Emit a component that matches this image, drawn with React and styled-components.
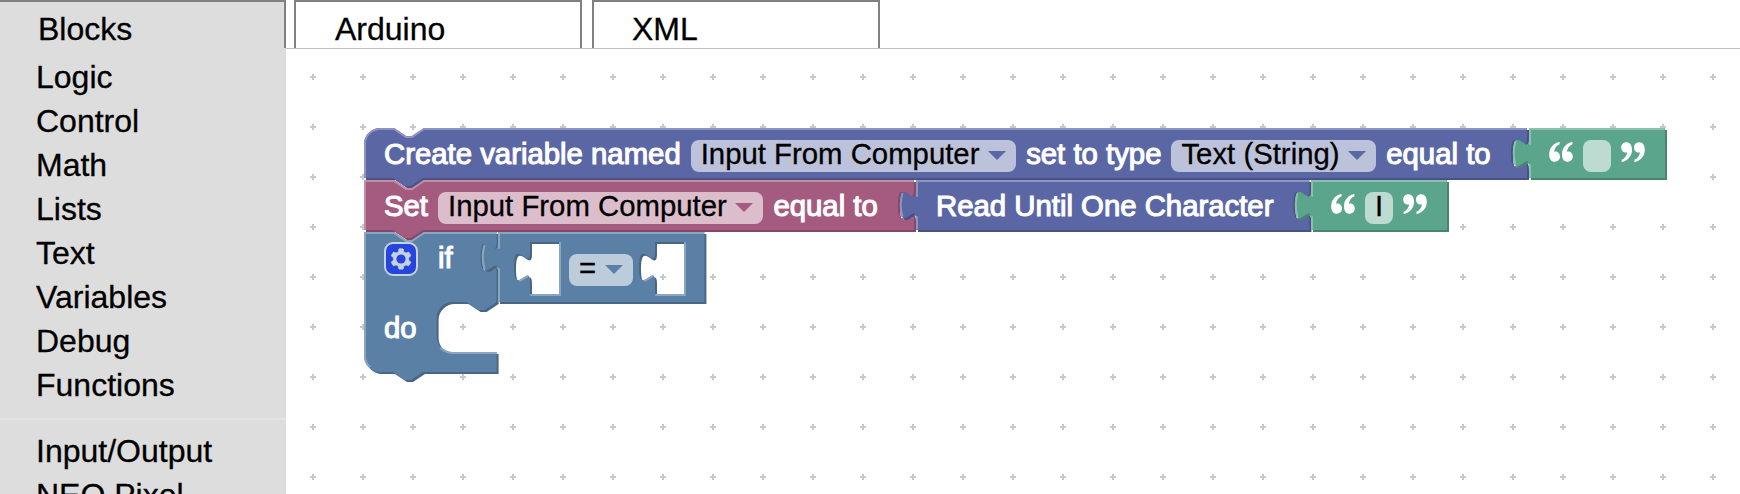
import React from "react";
import styled, { createGlobalStyle } from "styled-components";

const GlobalStyle = createGlobalStyle`
  * { box-sizing: border-box; }
  html, body { margin: 0; padding: 0; overflow: hidden; background: #fff; }
  body { font-family: "Liberation Sans", Arial, sans-serif; color: #000; }
`;

const Page = styled.div`
  display: flex;
  flex-direction: column;
  width: 1740px;
  height: 494px;
  overflow: hidden;
  -webkit-text-stroke: 0.3px #000;
`;

const TabBar = styled.header`
  display: flex;
  flex: none;
  height: 48px;
`;

const Tab = styled.div`
  width: ${(p) => p.$width}px;
  height: 48px;
  margin-right: ${(p) => p.$after}px;
  padding-left: ${(p) => p.$indent}px;
  border: solid #808080;
  border-width: ${(p) => (p.$active ? "2px 2px 0 0" : "2px 2px 0 2px")};
  background: ${(p) => (p.$active ? "#ddd" : "#fff")};
  font-size: 32px;
  line-height: 54px;
  white-space: nowrap;
`;

const Main = styled.div`
  display: flex;
  flex: 1;
  min-height: 0;
`;

const Toolbox = styled.nav`
  flex: none;
  width: 286px;
  padding-top: 7px;
  background: #ddd;
  overflow: hidden;
`;

const Category = styled.div`
  height: 44px;
  padding-left: 36px;
  font-size: 32px;
  line-height: 44px;
  white-space: nowrap;
`;

const Separator = styled.hr`
  height: 2px;
  margin: 11px 0 9px;
  border: 0;
  background: #e5e5e5;
`;

const Workspace = styled.main`
  position: relative;
  flex: 1;
  border-top: 1px solid #bfbfbf;
  background: #fff;
  overflow: hidden;
`;

const GridLayer = styled.svg`
  display: block;
  width: 100%;
  height: 100%;
`;

const BlockBox = styled.div`
  position: absolute;
  left: ${(p) => p.$x}px;
  top: ${(p) => p.$y}px;
  width: ${(p) => p.$w}px;
  height: ${(p) => p.$h}px;
`;

const Shape = styled.svg`
  position: absolute;
  inset: 0;
  width: 100%;
  height: 100%;
  overflow: visible;
`;

const Fields = styled.div`
  position: relative;
  display: flex;
  align-items: flex-start;
  gap: ${(p) => p.$gap ?? 10}px;
  padding: ${(p) => p.$top ?? 12}px 0 0 ${(p) => p.$left ?? 20}px;
  white-space: nowrap;
`;

const Label = styled.span`
  margin-top: ${(p) => p.$drop ?? 0}px;
  color: #fff;
  font-size: 29.33px;
  line-height: 27px;
  -webkit-text-stroke: 1.1px #fff;
`;

const Field = styled.span`
  display: flex;
  min-width: 28px;
  height: 32px;
  padding: 0 10px;
  border-radius: 8px;
  background: rgba(255, 255, 255, 0.6);
  font-size: 29.33px;
  line-height: 27px;
  white-space: pre;
`;

const Arrow = styled.svg`
  width: 18px;
  height: 9px;
  margin: 11px 0 0 8.7px;
`;

const QuoteMark = styled.svg`
  width: 24px;
  height: 24px;
  transform: ${(p) => (p.$closing ? "rotate(180deg)" : "none")};
`;

const Gear = styled.svg`
  width: 34px;
  height: 34px;
  opacity: 0.65;
  overflow: visible;
`;

const COLORS = {
  indigo: { main: "#5b67a5", light: "#8c95c0", dark: "#495284" },
  rose: { main: "#a55b80", light: "#c08ca6", dark: "#844966" },
  green: { main: "#5ba58c", light: "#8cc0ae", dark: "#498470" },
  steel: { main: "#5b80a5", light: "#8ca6c0", dark: "#496684" },
};

const TAB_DOWN = "c 0,10 -8,-8 -8,7.5 s 8,-2.5 8,7.5";
const TAB_UP = "c 0,-10 -8,8 -8,-7.5 s 8,2.5 8,-7.5";
const NOTCH = "l 6,4 3,0 6,-4";
const NOTCH_BACK = "l -6,4 -3,0 -6,-4";

const statement = (w, rounded) => ({
  body: `${rounded ? "M 0,8 A 8,8 0 0,1 8,0" : "M 0,0"} H 15 ${NOTCH} H ${w} V 5 ${TAB_DOWN} V 25 H 29.5 ${NOTCH_BACK} H 0 z`,
  edge: `M 0.5,24.5 ${rounded ? "V 8 A 7.5,7.5 0 0,1 8,0.5" : "V 0.5"} H 15 ${NOTCH} H ${w - 0.5} M ${w - 5},19.3 l 3.68,-2.1`,
});

const output = (w, h, socket, holes = []) => ({
  body:
    `M 0,0 H ${w} ${socket ? `V 5 ${TAB_DOWN}` : ""} V ${h} H 0 V 20 ${TAB_UP} z ` +
    holes.map(([a, b]) => `M ${a},5 V 10 ${TAB_DOWN} V 31 H ${b} V 5 z`).join(" "),
  edge:
    `M 0.5,${h - 0.5} V 18.5 m -7.36,-0.5 q -1.52,-5.5 0,-11 m 7.36,1 V 0.5 H ${w - 0.5} ` +
    (socket ? `M ${w - 5},19.3 l 3.68,-2.1 ` : "") +
    holes.map(([a, b]) => `M ${b + 0.5},5.5 V 31.5 H ${a + 0.5} M ${a - 5},24.3 l 3.68,-2.1`).join(" "),
});

const IF_SHAPE = {
  body: `M 0,0 H 15 ${NOTCH} H 66.3 V 5 ${TAB_DOWN} V 35 ${NOTCH_BACK} h -7 a 8,8 0 0,0 -8,8 v 9 a 8,8 0 0,0 8,8 H 66.3 V 70 H 29.5 ${NOTCH_BACK} H 8 a 8,8 0 0,1 -8,-8 z`,
  edge: `M 2.7,67.3 A 7.5,7.5 0 0,1 0.5,62 V 0.5 H 15 ${NOTCH} H 65.8 M 61.3,19.3 l 3.68,-2.1 M 38.6,58.2 A 8.5,8.5 0 0,0 44.3,60.5 H 65.8`,
};

function Block({ x, y, w, h, color, shape, children }) {
  const c = COLORS[color];
  return (
    <BlockBox $x={x - 286} $y={y - 49} $w={w} $h={h}>
      <Shape>
        <g transform="scale(2)">
          <path d={shape.body} transform="translate(1,1)" fill={c.dark} fillRule="evenodd" />
          <path d={shape.body} fill={c.main} fillRule="evenodd" />
          <path d={shape.edge} fill="none" stroke={c.light} strokeWidth="1" strokeLinecap="round" />
        </g>
      </Shape>
      {children}
    </BlockBox>
  );
}

function Dropdown({ color, children }) {
  return (
    <Field>
      {children}
      <Arrow viewBox="0 0 18 9">
        <path d="M0,0 H18 L9,9 z" fill={COLORS[color].main} />
      </Arrow>
    </Field>
  );
}

function Quote({ closing }) {
  return (
    <QuoteMark viewBox="0 0 24 24" $closing={closing}>
      {[0, 12.8].map((dx) => (
        <path
          key={dx}
          transform={`translate(${dx},0)`}
          fill="#fff"
          d="M10.6,2 C4.2,3 0.2,8 0.2,14.2 C0.2,19 2.2,21.8 5.8,21.8 C8.8,21.8 11,19.6 11,16.6 C11,13.6 9,11.6 6.2,11.6 C5.7,11.6 5.3,11.6 5,11.8 C5.5,8.4 7.4,5.4 10.6,4.2 z"
        />
      ))}
    </QuoteMark>
  );
}

function TextBlock({ x, y, value }) {
  return (
    <Block x={x} y={y} w={136} h={50} color="green" shape={output(68, 25, false)}>
      <Fields>
        <Quote />
        <Field>{value}</Field>
        <Quote closing />
      </Fields>
    </Block>
  );
}

function MutatorIcon() {
  return (
    <Gear viewBox="-0.5 -0.5 17 17">
      <rect width="16" height="16" rx="4" fill="#0b26fa" stroke="#fff" strokeWidth="1" />
      <path
        fill="#fff"
        stroke="#fff"
        strokeWidth="0.3"
        d="m4.203,7.296 0,1.368 -0.92,0.677 -0.11,0.41 0.9,1.559 0.41,0.11 1.043,-0.457 1.187,0.683 0.127,1.134 0.3,0.3 1.8,0 0.3,-0.299 0.127,-1.138 1.185,-0.682 1.046,0.458 0.409,-0.11 0.9,-1.559 -0.11,-0.41 -0.92,-0.677 0,-1.366 0.92,-0.677 0.11,-0.41 -0.9,-1.559 -0.409,-0.109 -1.046,0.458 -1.185,-0.682 -0.127,-1.138 -0.3,-0.299 -1.8,0 -0.3,0.3 -0.126,1.135 -1.187,0.682 -1.043,-0.457 -0.41,0.11 -0.899,1.559 0.108,0.409z"
      />
      <circle cx="8" cy="8" r="2.3" fill="#0b26fa" />
    </Gear>
  );
}

const CATEGORIES = ["Logic", "Control", "Math", "Lists", "Text", "Variables", "Debug", "Functions"];

export default function App() {
  return (
    <Page>
      <GlobalStyle />
      <TabBar>
        <Tab $active $width={286} $after={8} $indent={38}>Blocks</Tab>
        <Tab $width={288} $after={10} $indent={39}>Arduino</Tab>
        <Tab $width={288} $after={0} $indent={38}>XML</Tab>
      </TabBar>
      <Main>
        <Toolbox>
          {CATEGORIES.map((name) => (
            <Category key={name}>{name}</Category>
          ))}
          <Separator />
          <Category>Input/Output</Category>
          <Category>NEO Pixel</Category>
        </Toolbox>
        <Workspace>
          <GridLayer>
            <defs>
              <pattern id="grid" x="2" y="3" width="50" height="50" patternUnits="userSpaceOnUse">
                <path d="M22,25 h6 M25,22 v6" stroke="#c8c8c8" strokeWidth="2" />
              </pattern>
            </defs>
            <rect width="100%" height="100%" fill="url(#grid)" />
          </GridLayer>

          <Block x={364} y={128} w={1163} h={50} color="indigo" shape={statement(581.5, true)}>
            <Fields>
              <Label>Create variable named</Label>
              <Dropdown color="indigo">Input From Computer</Dropdown>
              <Label>set to type</Label>
              <Dropdown color="indigo">Text (String)</Dropdown>
              <Label>equal to</Label>
            </Fields>
          </Block>
          <TextBlock x={1529} y={128} value=" " />

          <Block x={364} y={180} w={550} h={50} color="rose" shape={statement(275, false)}>
            <Fields>
              <Label>Set</Label>
              <Dropdown color="rose">Input From Computer</Dropdown>
              <Label>equal to</Label>
            </Fields>
          </Block>
          <Block x={916} y={180} w={393} h={50} color="indigo" shape={output(196.7, 25, true)}>
            <Fields>
              <Label>Read Until One Character</Label>
            </Fields>
          </Block>
          <TextBlock x={1311} y={180} value="I" />

          <Block x={364} y={232} w={134} h={140} color="steel" shape={IF_SHAPE}>
            <Fields $top={10} $left={20} $gap={20}>
              <MutatorIcon />
              <Label $drop={2}>if</Label>
            </Fields>
            <Fields $top={38}>
              <Label>do</Label>
            </Fields>
          </Block>
          <Block
            x={498}
            y={232}
            w={206}
            h={70}
            color="steel"
            shape={output(103.2, 35, false, [[16, 30.5], [78.5, 93]])}
          >
            <Fields $top={22} $left={71}>
              <Dropdown color="steel">=</Dropdown>
            </Fields>
          </Block>
        </Workspace>
      </Main>
    </Page>
  );
}
